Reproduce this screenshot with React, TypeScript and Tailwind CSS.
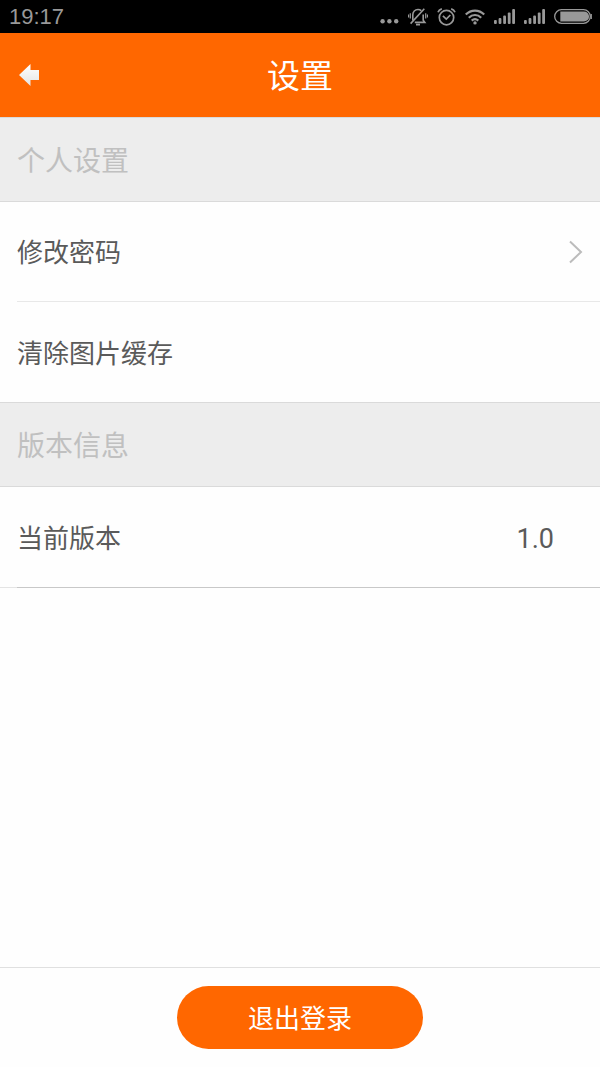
import React from "react";

// Status bar icons
const MoreDots = () => (
  <svg width="19" height="18" viewBox="0 0 19 18" fill="currentColor">
    <circle cx="2.6" cy="13.2" r="2.2" />
    <circle cx="9.4" cy="13.2" r="2.2" />
    <circle cx="16.200" cy="13.2" r="2.2" />
  </svg>
);

const BellOff = () => (
  <svg
    width="20"
    height="18"
    viewBox="0 0 20 18"
    fill="none"
    stroke="currentColor"
    strokeWidth="1.6"
  >
    <path d="M4.800 12.400V6.800C4.800 3.600 7 1.500 10 1.500c1.300 0 2.400.4 3.300 1.100M15.200 6.500v5.800l1.600 2.100H6.800M8 16.600h4" />
    <path d="M16.300.8 2.600 15.600" />
    <path d="M2.300 5.200v5.400M.5 6.500v3M17.700 5.200v5.400M19.500 6.500v3" strokeWidth="1.200" />
  </svg>
);

const Alarm = () => (
  <svg
    width="19"
    height="18"
    viewBox="0 0 19 18"
    fill="none"
    stroke="currentColor"
    strokeWidth="1.700"
  >
    <circle cx="9.500" cy="9.600" r="7.200" />
    <path d="M5.900 7.800 9.300 11l4-4" />
    <path d="M1 4.300C1.600 2.500 3 1.200 4.800.8M18 4.300C17.400 2.500 16 1.200 14.200.8" />
  </svg>
);

const Wifi = () => (
  <svg
    width="20"
    height="18"
    viewBox="0 0 20 18"
    fill="none"
    stroke="currentColor"
    strokeWidth="2.200"
  >
    <path d="M.8 6.600c5.200-5.400 13.200-5.400 18.400 0M3.800 9.700c3.600-3.600 8.800-3.600 12.400 0M6.700 12.600c2-1.800 4.600-1.800 6.600 0" />
    <circle cx="10" cy="14.900" r="1.700" fill="currentColor" stroke="none" />
  </svg>
);

const Signal = () => (
  <svg width="21" height="18" viewBox="0 0 21 18" fill="currentColor">
    <rect x="0" y="12" width="2.800" height="4" rx="1" />
    <rect x="4.600" y="10" width="2.800" height="6" rx="1" />
    <rect x="9.200" y="7.500" width="2.800" height="8.500" rx="1" />
    <rect x="13.800" y="4.500" width="2.800" height="11.500" rx="1" />
    <rect x="18.200" y="1" width="2.800" height="15" rx="1" />
  </svg>
);

const Battery = () => (
  <svg width="38" height="18" viewBox="0 0 38 18">
    <rect
      x=".7"
      y="1.700"
      width="35.600"
      height="13.600"
      rx="6.800"
      fill="none"
      stroke="currentColor"
      strokeWidth="1.300"
    />
    <path d="M6.300 3.400H30a5.100 5.100 0 0 1 0 10.200H6.300z" fill="currentColor" />
    <path d="M37.200 6v5" stroke="currentColor" strokeWidth="1.400" />
  </svg>
);

const BackArrow = () => (
  <svg width="20" height="22" viewBox="0 0 20 22">
    <defs>
      <linearGradient id="arrow" x1="0" y1="0" x2="0" y2="1">
        <stop offset="0" stopColor="#ffffff" />
        <stop offset="1" stopColor="#e4e4e4" />
      </linearGradient>
    </defs>
    <path d="M0 11 11.500 0v6H20v10h-8.500v6z" fill="url(#arrow)" />
  </svg>
);

const ChevronRight = () => (
  <svg
    width="14"
    height="24"
    viewBox="0 0 14 24"
    fill="none"
    stroke="#bcbcbc"
    strokeWidth="2"
  >
    <path d="M1 1.500 12 12 1 22.500" />
  </svg>
);

const StatusBar = () => (
  <div className="flex items-center justify-between bg-black py-1 pr-2 pl-[9px] text-[#999999]">
    <span className="font-['Liberation_Sans',sans-serif] text-[22px] leading-[25px]">
      19:17
    </span>
    <div className="flex items-center gap-[9px]">
      <MoreDots />
      <BellOff />
      <Alarm />
      <Wifi />
      <Signal />
      <Signal />
      <Battery />
    </div>
  </div>
);

const SectionTitle = ({ children }: { children: React.ReactNode }) => (
  <h2 className="border-y border-[#dadada] bg-[#ededed] px-[17px] pt-6 pb-[19px] text-[28px] leading-10 text-[#c0c0c0]">
    {children}
  </h2>
);

export default function App() {
  return (
    <div className="flex min-h-screen flex-col bg-[#fefefe] font-[Roboto,'Noto_Sans_CJK_SC',sans-serif] text-[#5a5a5a]">
      <StatusBar />

      <header className="grid grid-cols-[1fr_auto_1fr] items-center bg-[#ff6700] px-[19px] py-5 text-white">
        <button type="button" aria-label="返回" className="justify-self-start">
          <BackArrow />
        </button>
        <h1 className="pt-1 text-[33px] leading-10">设置</h1>
      </header>

      <main className="flex-1 text-[26px] leading-10">
        <SectionTitle>个人设置</SectionTitle>
        <div className="pl-[17px]">
          <button
            type="button"
            className="flex w-full items-center justify-between border-b border-[#e8e8e8] py-7 pr-[17px] text-left"
          >
            <span className="pt-[3px]">修改密码</span>
            <ChevronRight />
          </button>
          <button type="button" className="block w-full pt-8 pb-7 text-left">
            清除图片缓存
          </button>
        </div>

        <SectionTitle>版本信息</SectionTitle>
        <div className="border-b border-[#e4e4e4] pl-[17px]">
          <div className="-mb-px flex items-center justify-between border-b border-[#c8c8c8] pt-8 pr-[46px] pb-7">
            <span>当前版本</span>
            <span className="text-[27px]">1.0</span>
          </div>
        </div>
      </main>

      <footer className="flex justify-center border-t border-[#e0e0e0] py-[18px]">
        <button
          type="button"
          className="rounded-full bg-[#ff6700] px-[71px] pt-[13px] pb-[10px] text-[26px] leading-10 text-white"
        >
          退出登录
        </button>
      </footer>
    </div>
  );
}
